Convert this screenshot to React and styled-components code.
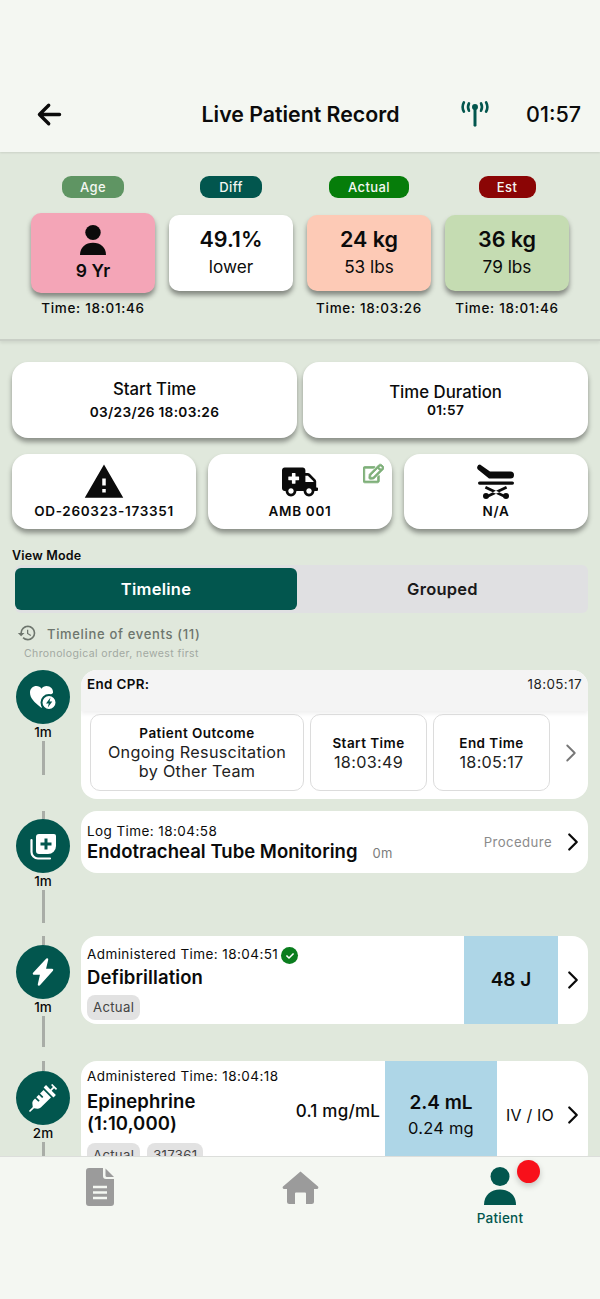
import React from "react";
import styled, { createGlobalStyle } from "styled-components";
import { IoArrowBack } from "react-icons/io5";
import { MdWarning, MdHistory } from "react-icons/md";
import { FaAmbulance, FaRegEdit, FaSyringe, FaCheck } from "react-icons/fa";
import { ChevronRight } from "lucide-react";

const GREEN = "#02564e";

const Global = createGlobalStyle`
  html, body { margin: 0; padding: 0; background: #e0e8dc; }
  * { box-sizing: border-box; }
  body { font-family: Inter, "Liberation Sans", sans-serif; color: #0b0b0b; }
`;

const Page = styled.div`
  width: 600px;
  height: 1299px;
  display: flex;
  flex-direction: column;
  overflow: hidden;
  background: #e0e8dc;
`;

const Header = styled.header`
  flex: none;
  height: 152px;
  background: #f4f7f2;
  box-shadow: 0 1px 2px rgba(0, 0, 0, 0.1);
  padding: 92px 19px 0 33px;
  display: grid;
  grid-template-columns: 33px 1fr 60px 55px;
  align-items: start;
  position: relative;
  z-index: 2;
`;
const BackBtn = styled.div`
  font-size: 33px;
  height: 44px;
  display: flex;
  align-items: center;
  color: #0b0b0b;
  svg path, svg line { stroke-width: 52px; }
`;
const Title = styled.h1`
  margin: 0;
  font-size: 21.3px;
  line-height: 44px;
  font-weight: 600;
  text-align: center;
  padding-left: 69px;
  white-space: nowrap;
`;
const Signal = styled.div`
  height: 44px;
  display: flex;
  align-items: center;
  margin-left: -5px;
`;
const Clock = styled.div`
  font-size: 21.5px;
  line-height: 44px;
  font-weight: 500;
  text-align: right;
  white-space: nowrap;
`;

const Summary = styled.section`
  flex: none;
  height: 189px;
  padding: 24px 31px 0;
  border-bottom: 2px solid #c9cfc6;
  box-shadow: 0 2px 3px rgba(0, 0, 0, 0.08);
  display: grid;
  grid-template-columns: repeat(4, 124px);
  column-gap: 14px;
  align-content: start;
  position: relative;
  z-index: 1;
`;
const StatCol = styled.div`
  display: flex;
  flex-direction: column;
  align-items: center;
`;
const Chip = styled.div`
  height: 22px;
  width: ${(p) => p.$w}px;
  text-align: center;
  border-radius: 9px;
  background: ${(p) => p.$bg};
  color: #f4f7f2;
  font-size: 13px;
  font-weight: 500;
  letter-spacing: 0.4px;
  line-height: 22px;
`;
const StatCard = styled.div`
  width: 100%;
  height: ${(p) => (p.$tall ? 80 : 76)}px;
  margin-top: ${(p) => (p.$tall ? 15 : 17)}px;
  border-radius: 10px;
  background: ${(p) => p.$bg};
  box-shadow: 0 4px 5px rgba(0, 0, 0, 0.42);
  display: flex;
  flex-direction: column;
  align-items: center;
  justify-content: center;
  padding-bottom: ${(p) => (p.$tall ? 0 : 2)}px;
`;
const StatMain = styled.div`
  font-size: 21.5px;
  line-height: 26px;
  font-weight: 600;
`;
const StatSub = styled.div`
  font-size: 17.2px;
  line-height: 22px;
  font-weight: 400;
  margin-top: 4px;
`;
const StatAge = styled.div`
  font-size: 17.5px;
  line-height: 22px;
  font-weight: 600;
  margin-top: 5px;
`;
const StatTime = styled.div`
  margin-top: ${(p) => (p.$tall ? 7 : 9)}px;
  font-size: 13.5px;
  line-height: 16px;
  font-weight: 500;
  letter-spacing: 0.7px;
  white-space: nowrap;
`;

const Info = styled.section`
  flex: none;
  padding: 21px 12px 0;
`;
const TwoCol = styled.div`
  display: grid;
  grid-template-columns: 285px 285px;
  column-gap: 6px;
`;
const ThreeCol = styled.div`
  display: grid;
  grid-template-columns: repeat(3, 184px);
  column-gap: 12px;
  margin-top: 16px;
`;
const InfoCard = styled.div`
  height: ${(p) => p.$h || 76}px;
  background: #fff;
  border-radius: 16px;
  box-shadow: 0 4px 5px rgba(0, 0, 0, 0.38);
  display: flex;
  flex-direction: column;
  align-items: center;
  justify-content: center;
  position: relative;
  padding-bottom: ${(p) => p.$pb || 0}px;
`;
const InfoTitle = styled.div`
  font-size: 16.8px;
  line-height: 22px;
  font-weight: 500;
`;
const InfoValue = styled.div`
  font-size: 13.7px;
  line-height: ${(p) => p.$lh || 18}px;
  font-weight: 600;
  letter-spacing: 0.3px;
  margin-top: ${(p) => p.$mt || 0}px;
`;
const InfoIcon = styled.div`
  height: 36px;
  display: flex;
  align-items: center;
  justify-content: center;
  font-size: 42px;
  color: #0b0b0b;
`;
const CodeText = styled.div`
  font-size: 13.5px;
  line-height: 18px;
  font-weight: 600;
  letter-spacing: 0.7px;
  margin-top: 2px;
`;
const EditBadge = styled.div`
  position: absolute;
  top: 9px;
  right: 8px;
  font-size: 21px;
  line-height: 0;
  color: #7fb07a;
  svg { stroke: currentColor; stroke-width: 22px; }
`;

const ViewLabel = styled.div`
  margin-top: 19px;
  font-size: 12.5px;
  line-height: 16px;
  font-weight: 600;
  letter-spacing: 0.2px;
`;
const Segment = styled.div`
  margin: 1px 0 0 3px;
  width: 573px;
  height: 48px;
  background: #e0e0e2;
  border-radius: 6px;
  padding: 3px 0;
  display: grid;
  grid-template-columns: 282px 1fr;
`;
const SegBtn = styled.div`
  border-radius: 6px;
  background: ${(p) => (p.$active ? GREEN : "transparent")};
  color: ${(p) => (p.$active ? "#fff" : "#1a1a1a")};
  font-size: 16.5px;
  font-weight: 600;
  letter-spacing: 0.25px;
  display: flex;
  align-items: center;
  justify-content: center;
  height: 42px;
`;
const TimelineHead = styled.div`
  margin: 11px 0 0 5px;
  display: flex;
  align-items: center;
  gap: 10px;
  height: 20px;
  color: #6d756d;
  font-size: 13px;
  font-weight: 500;
  letter-spacing: 0.67px;
`;
const HeadIcon = styled.div`
  font-size: 20px;
  line-height: 0;
  margin-top: -3px;
`;
const TimelineSub = styled.div`
  margin: 3px 0 0 12px;
  color: #a2a9a2;
  font-size: 10.5px;
  line-height: 14px;
  letter-spacing: 0.4px;
`;

const Timeline = styled.section`
  flex: 1;
  min-height: 0;
  overflow: hidden;
  padding: 9px 12px 0 16px;
  display: flex;
  flex-direction: column;
`;
const Row = styled.div`
  flex: none;
  display: grid;
  grid-template-columns: 54px 1fr;
  column-gap: 11px;
  align-items: start;
  margin-bottom: ${(p) => p.$mb}px;
`;
const Rail = styled.div`
  display: flex;
  flex-direction: column;
  align-items: center;
`;
const Stub = styled.div`
  width: 3px;
  height: ${(p) => p.$h}px;
  background: #a9ada7;
`;
const Circle = styled.div`
  width: 54px;
  height: 54px;
  border-radius: 50%;
  background: ${GREEN};
  color: #fff;
  display: flex;
  align-items: center;
  justify-content: center;
  flex: none;
`;
const RailLabel = styled.div`
  font-size: 13.5px;
  line-height: 16px;
  font-weight: 500;
  height: 17px;
`;

const Card = styled.article`
  background: #fff;
  border-radius: 16px;
  overflow: hidden;
  height: ${(p) => p.$h}px;
  display: flex;
`;
const ColumnCard = styled(Card)`
  flex-direction: column;
`;
const CprHead = styled.div`
  height: 41px;
  background: #f4f4f4;
  box-shadow: 0 3px 4px rgba(0, 0, 0, 0.06);
  padding: 6px 6px 0;
  display: flex;
  justify-content: space-between;
  align-items: flex-start;
  font-size: 13.4px;
  line-height: 16px;
`;
const CprTitle = styled.span`
  font-weight: 600;
  letter-spacing: 0.35px;
`;
const CprTime = styled.span`
  letter-spacing: 0.42px;
  color: #222;
`;
const CprBody = styled.div`
  display: flex;
  align-items: center;
  padding: 3px 0 0 9px;
  gap: 6px;
`;
const Tile = styled.div`
  flex: none;
  width: ${(p) => p.$w}px;
  height: 77px;
  border: 1px solid #dcdcdc;
  border-radius: 10px;
  display: flex;
  flex-direction: column;
  align-items: center;
  justify-content: center;
  text-align: center;
`;
const TileLabel = styled.div`
  font-size: 13.5px;
  line-height: 19px;
  font-weight: 600;
  letter-spacing: 0.45px;
`;
const TileValue = styled.div`
  font-size: 16.2px;
  line-height: 19px;
  letter-spacing: 0.3px;
  color: #222;
`;
const Chev = styled.div`
  flex: none;
  display: flex;
  align-items: center;
  justify-content: center;
  width: ${(p) => p.$w}px;
  color: ${(p) => p.$c};
  align-self: center;
`;
const CardMain = styled.div`
  flex: 1;
  min-width: 0;
  padding: ${(p) => p.$pt}px 6px 0;
`;
const TimeLine = styled.div`
  display: flex;
  align-items: center;
  font-size: 13.5px;
  line-height: 16px;
  letter-spacing: 0.42px;
  gap: 3px;
`;
const ProcTitleRow = styled.div`
  display: flex;
  align-items: baseline;
  gap: 15px;
`;
const BigTitle = styled.div`
  font-size: 18.5px;
  line-height: ${(p) => p.$lh || 24}px;
  font-weight: 600;
  margin-top: ${(p) => p.$mt || 0}px;
  letter-spacing: ${(p) => p.$ls || 0.1}px;
`;
const Small0 = styled.span`
  font-size: 13px;
  color: #7c7c7c;
  letter-spacing: 0.2px;
`;
const Kind = styled.div`
  align-self: center;
  font-size: 13.2px;
  color: #8b8b8b;
  letter-spacing: 0.4px;
  margin: 0 6px 1px 0;
`;
const DoseCell = styled.div`
  flex: none;
  width: ${(p) => p.$w}px;
  background: #aed6e7;
  display: flex;
  flex-direction: column;
  align-items: center;
  justify-content: center;
`;
const DoseMain = styled.div`
  font-size: 19px;
  line-height: 24px;
  font-weight: 600;
`;
const DoseSub = styled.div`
  font-size: 16.5px;
  line-height: 22px;
  margin-top: 2px;
  letter-spacing: 0.2px;
`;
const CheckDot = styled.span`
  display: inline-flex;
  width: 17px;
  height: 17px;
  border-radius: 50%;
  background: #0a7d1e;
  color: #fff;
  font-size: 8px;
  align-items: center;
  justify-content: center;
  margin-top: 3px;
`;
const Tags = styled.div`
  display: flex;
  gap: 7px;
  margin-top: ${(p) => p.$mt}px;
`;
const Tag = styled.span`
  height: 25px;
  padding: 0 6px;
  border-radius: 8px;
  background: #e2e2e2;
  color: #444;
  font-size: 13.2px;
  line-height: 25px;
  letter-spacing: 0.3px;
`;
const Conc = styled.div`
  flex: none;
  align-self: center;
  font-size: 17px;
  font-weight: 500;
  padding: 0 5px 0 0;
  margin-bottom: 8px;
  letter-spacing: 0.2px;
  white-space: nowrap;
`;
const Route = styled.div`
  flex: none;
  align-self: center;
  font-size: 16px;
  padding-left: 9px;
  width: 61px;
  letter-spacing: 0.2px;
  white-space: nowrap;
`;

const BottomNav = styled.nav`
  flex: none;
  height: 143px;
  background: #f4f7f2;
  border-top: 1px solid #dcdedb;
  display: grid;
  grid-template-columns: 200px 200px 200px;
  position: relative;
  z-index: 2;
`;
const NavItem = styled.div`
  display: flex;
  flex-direction: column;
  align-items: center;
  padding-top: ${(p) => p.$top}px;
  color: ${(p) => (p.$active ? GREEN : "#9b9b9b")};
  line-height: 0;
  position: relative;
`;
const NavLabel = styled.div`
  font-size: 13.5px;
  line-height: 16px;
  font-weight: 500;
  letter-spacing: 0.25px;
  margin-top: 5px;
`;
const RedDot = styled.div`
  position: absolute;
  top: 3px;
  left: 117px;
  width: 23px;
  height: 23px;
  border-radius: 50%;
  background: #f8101a;
  box-shadow: 0 3px 6px rgba(0, 0, 0, 0.2);
`;

const SignalIcon = () => (
  <svg width="28" height="26" viewBox="0 0 30 28" fill="none" stroke={GREEN} strokeLinecap="round">
    <path d="M15 7v19" strokeWidth="3.200" />
    <circle cx="15" cy="6.500" r="3.200" fill={GREEN} stroke="none" />
    <path d="M8.500 2.500c-1.300 2.500-1.300 5.500 0 8M21.500 2.500c1.300 2.500 1.300 5.500 0 8" strokeWidth="2.800" />
    <path d="M3 1.500c-1.600 3-1.600 7 0 10M27 1.500c1.600 3 1.600 7 0 10" strokeWidth="2.800" />
  </svg>
);

const PersonIcon = ({ w, h }) => (
  <svg width={w} height={h} viewBox="0 0 32 38" fill="currentColor" preserveAspectRatio="none">
    <circle cx="16" cy="9.500" r="9.500" />
    <path d="M0 38c0-10 7-15.500 16-15.500S32 28 32 38z" />
  </svg>
);

const StretcherIcon = () => (
  <svg width="38" height="36" viewBox="0 0 38 36" fill="#0b0b0b">
    <path d="M3 0.500l10 7h20.500a3.500 3.500 0 0 1 0 7H12L1.500 6a3 3 0 0 1 1.500-5.500z" />
    <rect x="1" y="17.500" width="36" height="3.200" rx="1.600" />
    <path d="M9 22l19 9-1.200 2.500-19-9zM29 22L10 31l1.200 2.500 19-9z" />
    <circle cx="9" cy="32" r="3" />
    <circle cx="29" cy="32" r="3" />
  </svg>
);

const HeartBolt = () => (
  <svg width="30" height="30" viewBox="0 0 30 30">
    <path
      d="M13.500 26C6 20 2 16 2 10.500 2 6.500 5 4 8.500 4c2 0 4 1 5 2.800C14.500 5 16.500 4 18.500 4 22.500 4 25.500 7 25 11 22 13 15 20 13.500 26z"
      fill="#fff"
    />
    <circle cx="21" cy="20.500" r="7.500" fill="#fff" stroke={GREEN} strokeWidth="2" />
    <path d="M22.500 15.500l-4.500 6h2.800l-1 4 4.500-6h-2.800z" fill={GREEN} />
  </svg>
);

const StackPlus = () => (
  <svg width="30" height="30" viewBox="0 0 30 30" fill="none">
    <path d="M3.500 9v12a6.500 6.500 0 0 0 6.500 6.500h12" stroke="#fff" strokeWidth="2.200" strokeLinecap="round" />
    <path d="M11 3h15a2 2 0 0 1 2 2v10a8 8 0 0 1-8 8h-9a3 3 0 0 1-3-3V6a3 3 0 0 1 3-3z" fill="#fff" />
    <path d="M16.500 7.500h3V11.500h4v3h-4v4h-3v-4h-4v-3h4z" fill={GREEN} />
  </svg>
);

const BoltIcon = () => (
  <svg width="24" height="30" viewBox="0 0 24 30" fill="#fff" stroke="#fff" strokeWidth="2.500" strokeLinejoin="round">
    <path d="M16 2.500L3 16.500h7.500L8 27.500l13-14.500h-7.500z" />
  </svg>
);

const DocIcon = () => (
  <svg width="28" height="38" viewBox="0 0 28 38">
    <path
      d="M3 0h14v8a3 3 0 0 0 3 3h8v24a3 3 0 0 1-3 3H3a3 3 0 0 1-3-3V3a3 3 0 0 1 3-3z"
      fill="currentColor"
    />
    <path d="M19.500 0.500L28 9h-7a1.500 1.500 0 0 1-1.500-1.500z" fill="currentColor" />
    <path d="M7 19h14M7 24.500h14M7 30h14" stroke="#f4f7f2" strokeWidth="2.400" />
  </svg>
);

const HomeIcon = () => (
  <svg width="37" height="33" viewBox="0 0 37 33" fill="currentColor">
    <path d="M18.500 0.500L36 15.500a1.500 1.500 0 0 1-1 2.500h-3v12.500a2.500 2.500 0 0 1-2.500 2.500H24V22.500a1 1 0 0 0-1-1h-9a1 1 0 0 0-1 1V33H7.500A2.500 2.500 0 0 1 5 30.500V18H2a1.500 1.500 0 0 1-1-2.500z" />
  </svg>
);

const Chevron = ({ s = 34, c = "#0b0b0b", w = 30, sw = 1.8 }) => (
  <Chev $c={c} $w={w}>
    <ChevronRight size={s} strokeWidth={sw} />
  </Chev>
);

export default function App() {
  return (
    <Page>
      <Global />
      <Header>
        <BackBtn>
          <IoArrowBack />
        </BackBtn>
        <Title>Live Patient Record</Title>
        <Signal>
          <SignalIcon />
        </Signal>
        <Clock>01:57</Clock>
      </Header>

      <Summary>
        <StatCol>
          <Chip $bg="#5f9563" $w={62}>Age</Chip>
          <StatCard $tall $bg="#f4a5b7">
            <PersonIcon w={26} h={30} />
            <StatAge>9 Yr</StatAge>
          </StatCard>
          <StatTime $tall>Time: 18:01:46</StatTime>
        </StatCol>
        <StatCol>
          <Chip $bg={GREEN} $w={62}>Diff</Chip>
          <StatCard $bg="#fff">
            <StatMain>49.1%</StatMain>
            <StatSub>lower</StatSub>
          </StatCard>
        </StatCol>
        <StatCol>
          <Chip $bg="#067d0a" $w={80}>Actual</Chip>
          <StatCard $bg="#fdcab6">
            <StatMain>24 kg</StatMain>
            <StatSub>53 lbs</StatSub>
          </StatCard>
          <StatTime>Time: 18:03:26</StatTime>
        </StatCol>
        <StatCol>
          <Chip $bg="#8b0505" $w={57}>Est</Chip>
          <StatCard $bg="#c5dcb2">
            <StatMain>36 kg</StatMain>
            <StatSub>79 lbs</StatSub>
          </StatCard>
          <StatTime>Time: 18:01:46</StatTime>
        </StatCol>
      </Summary>

      <Info>
        <TwoCol>
          <InfoCard $pb={2}>
            <InfoTitle>Start Time</InfoTitle>
            <InfoValue $mt={3}>03/23/26 18:03:26</InfoValue>
          </InfoCard>
          <InfoCard $pb={2}>
            <InfoTitle>Time Duration</InfoTitle>
            <InfoValue $lh={14}>01:57</InfoValue>
          </InfoCard>
        </TwoCol>
        <ThreeCol>
          <InfoCard $h={75}>
            <InfoIcon>
              <MdWarning />
            </InfoIcon>
            <CodeText>OD-260323-173351</CodeText>
          </InfoCard>
          <InfoCard $h={75}>
            <InfoIcon>
              <FaAmbulance size={36} />
            </InfoIcon>
            <CodeText>AMB 001</CodeText>
            <EditBadge>
              <FaRegEdit />
            </EditBadge>
          </InfoCard>
          <InfoCard $h={75}>
            <InfoIcon>
              <StretcherIcon />
            </InfoIcon>
            <CodeText>N/A</CodeText>
          </InfoCard>
        </ThreeCol>
        <ViewLabel>View Mode</ViewLabel>
        <Segment>
          <SegBtn $active>Timeline</SegBtn>
          <SegBtn>Grouped</SegBtn>
        </Segment>
        <TimelineHead>
          <HeadIcon>
            <MdHistory />
          </HeadIcon>
          Timeline of events (11)
        </TimelineHead>
        <TimelineSub>Chronological order, newest first</TimelineSub>
      </Info>

      <Timeline>
        <Row $mb={12}>
          <Rail>
            <Circle>
              <HeartBolt />
            </Circle>
            <RailLabel>1m</RailLabel>
            <Stub $h={34} />
          </Rail>
          <ColumnCard $h={129}>
            <CprHead>
              <CprTitle>End CPR:</CprTitle>
              <CprTime>18:05:17</CprTime>
            </CprHead>
            <CprBody>
              <Tile $w={214}>
                <TileLabel>Patient Outcome</TileLabel>
                <TileValue>
                  Ongoing Resuscitation
                  <br />
                  by Other Team
                </TileValue>
              </Tile>
              <Tile $w={117}>
                <TileLabel>Start Time</TileLabel>
                <TileValue>18:03:49</TileValue>
              </Tile>
              <Tile $w={117}>
                <TileLabel>End Time</TileLabel>
                <TileValue>18:05:17</TileValue>
              </Tile>
              <Chevron s={30} c="#777" w={30} sw={1.5} />
            </CprBody>
          </ColumnCard>
        </Row>

        <Row $mb={13}>
          <Rail>
            <Stub $h={8} />
            <Circle>
              <StackPlus />
            </Circle>
            <RailLabel>1m</RailLabel>
            <Stub $h={33} />
          </Rail>
          <Card $h={62}>
            <CardMain $pt={12}>
              <TimeLine>Log Time: 18:04:58</TimeLine>
              <ProcTitleRow>
                <BigTitle $ls={0.03}>Endotracheal Tube Monitoring</BigTitle>
                <Small0>0m</Small0>
              </ProcTitleRow>
            </CardMain>
            <Kind>Procedure</Kind>
            <Chevron />
          </Card>
        </Row>

        <Row $mb={14}>
          <Rail>
            <Stub $h={9} />
            <Circle>
              <BoltIcon />
            </Circle>
            <RailLabel>1m</RailLabel>
            <Stub $h={31} />
          </Rail>
          <Card $h={88}>
            <CardMain $pt={8}>
              <TimeLine>
                Administered Time: 18:04:51
                <CheckDot>
                  <FaCheck />
                </CheckDot>
              </TimeLine>
              <BigTitle $mt={1}>Defibrillation</BigTitle>
              <Tags $mt={6}>
                <Tag>Actual</Tag>
              </Tags>
            </CardMain>
            <DoseCell $w={94}>
              <DoseMain>48 J</DoseMain>
            </DoseCell>
            <Chevron />
          </Card>
        </Row>

        <Row $mb={0}>
          <Rail>
            <Stub $h={10} />
            <Circle>
              <FaSyringe size={28} />
            </Circle>
            <RailLabel>2m</RailLabel>
            <Stub $h={31} />
          </Rail>
          <Card $h={108}>
            <CardMain $pt={7}>
              <TimeLine>Administered Time: 18:04:18</TimeLine>
              <BigTitle $mt={6} $lh={22}>
                Epinephrine
                <br />
                (1:10,000)
              </BigTitle>
              <Tags $mt={9}>
                <Tag>Actual</Tag>
                <Tag>317361</Tag>
              </Tags>
            </CardMain>
            <Conc>0.1 mg/mL</Conc>
            <DoseCell $w={112}>
              <DoseMain>2.4 mL</DoseMain>
              <DoseSub>0.24 mg</DoseSub>
            </DoseCell>
            <Route>IV / IO</Route>
            <Chevron />
          </Card>
        </Row>
      </Timeline>

      <BottomNav>
        <NavItem $top={11}>
          <DocIcon />
        </NavItem>
        <NavItem $top={14}>
          <HomeIcon />
        </NavItem>
        <NavItem $top={10} $active>
          <PersonIcon w={32} h={38} />
          <NavLabel>Patient</NavLabel>
          <RedDot />
        </NavItem>
      </BottomNav>
    </Page>
  );
}
